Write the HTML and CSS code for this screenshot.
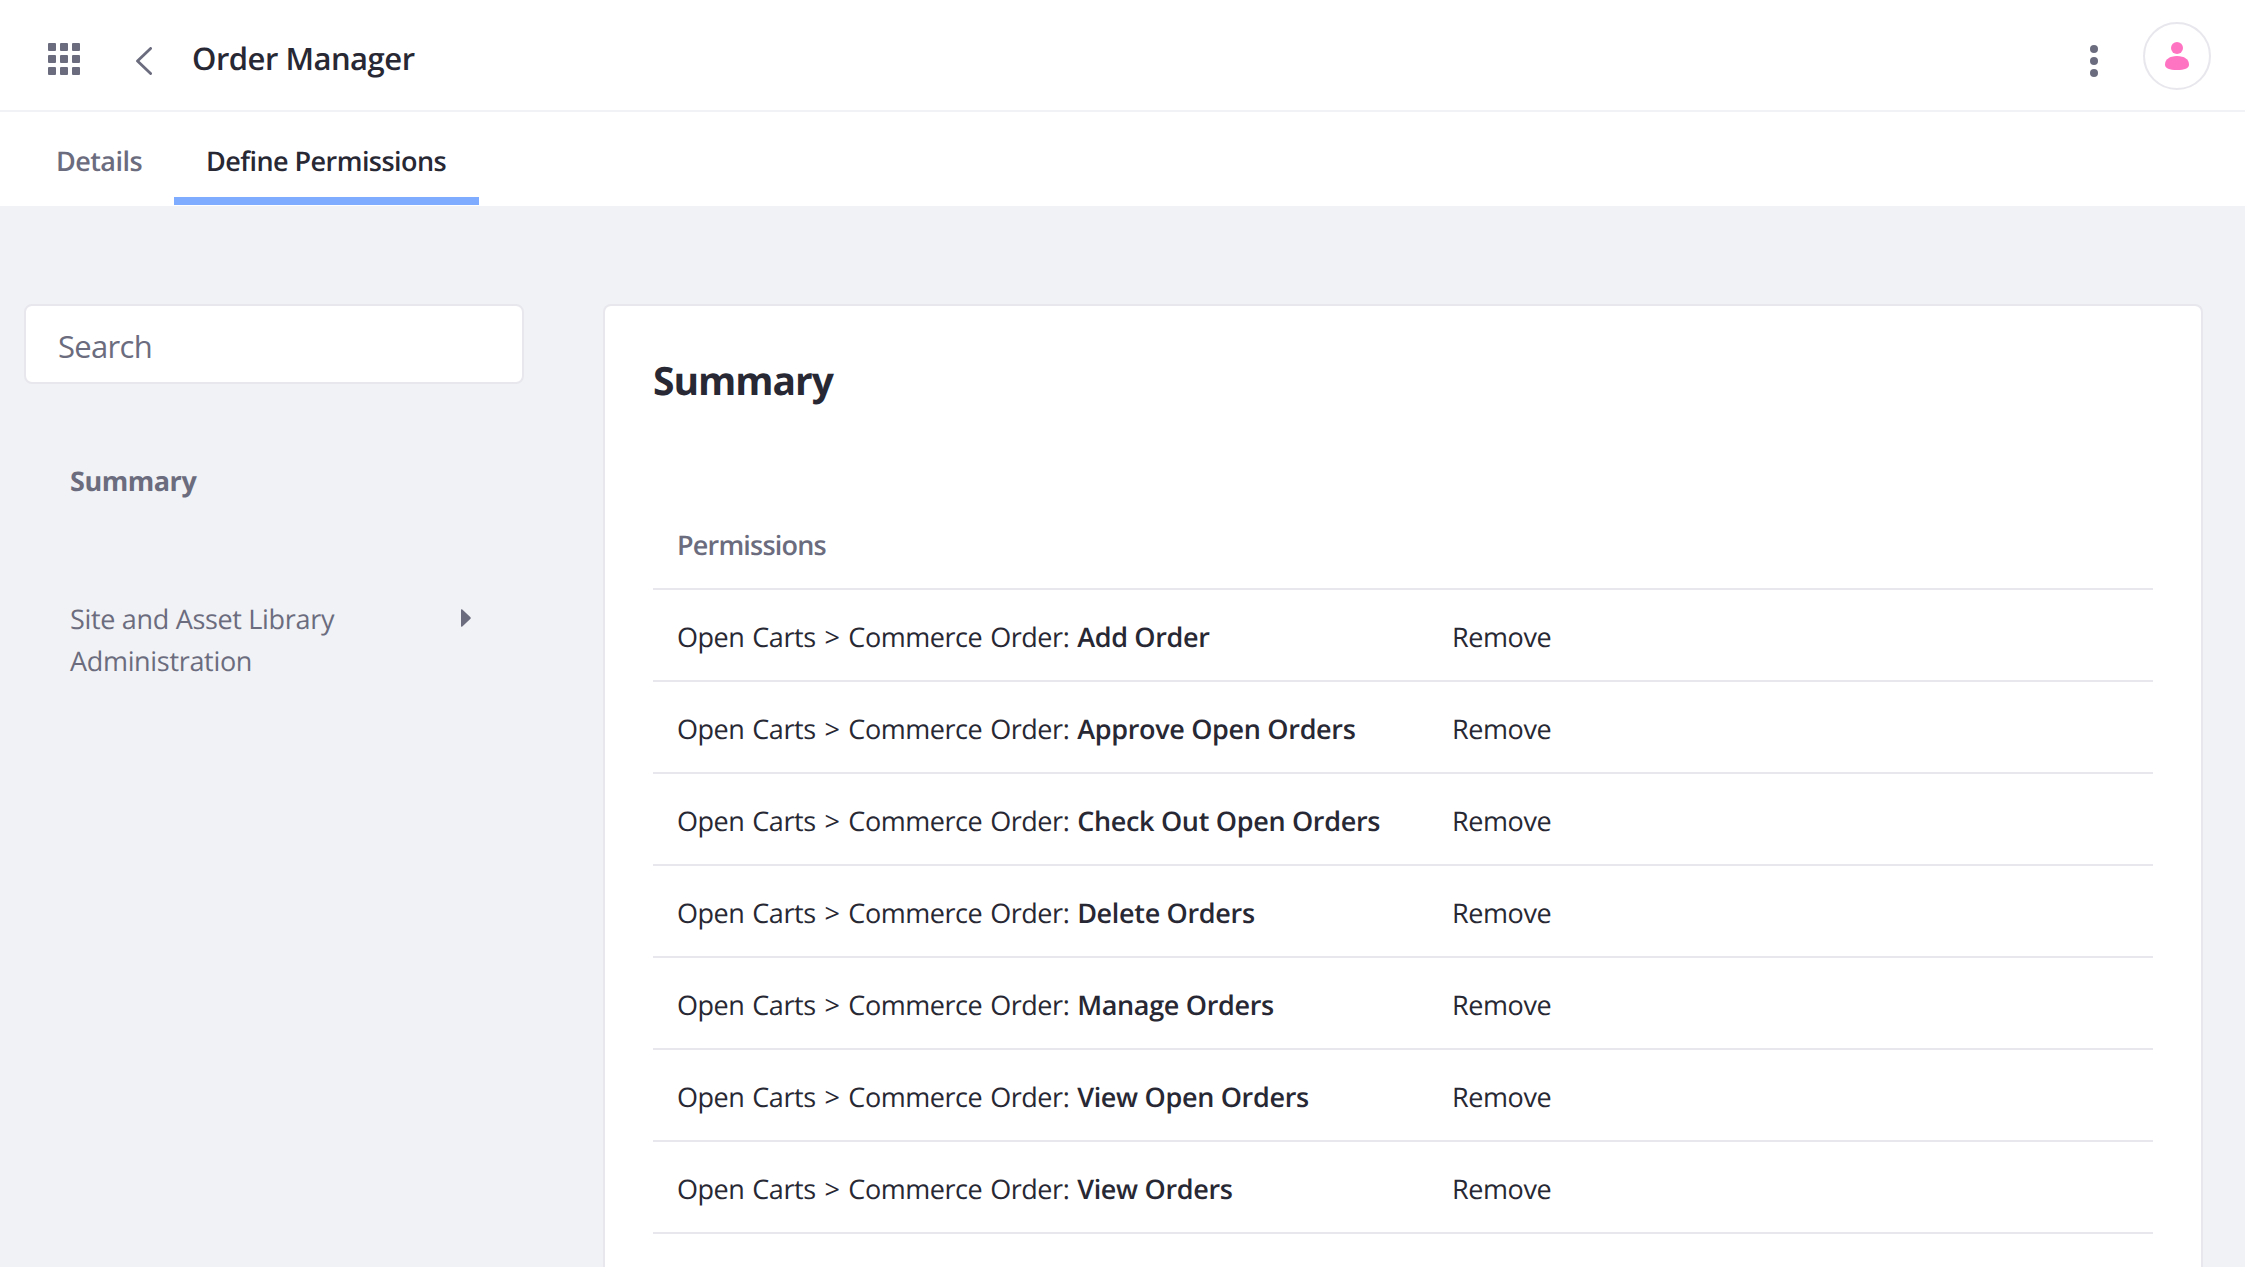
FILE: index.html
```html
<!DOCTYPE html>
<html lang="en">
<head>
<meta charset="utf-8">
<title>Order Manager</title>
<link rel="stylesheet" href="styles.css">
</head>
<body>
<header class="header">
  <svg class="icon-apps" viewBox="0 0 32 32">
    <rect width="8" height="8" rx="1"/><rect x="12" width="8" height="8" rx="1"/><rect x="24" width="8" height="8" rx="1"/>
    <rect y="12" width="8" height="8" rx="1"/><rect x="12" y="12" width="8" height="8" rx="1"/><rect x="24" y="12" width="8" height="8" rx="1"/>
    <rect y="24" width="8" height="8" rx="1"/><rect x="12" y="24" width="8" height="8" rx="1"/><rect x="24" y="24" width="8" height="8" rx="1"/>
  </svg>
  <svg class="icon-back" viewBox="0 0 16 28"><path d="M14.6 1.4 1.5 14l13.100 12.600"/></svg>
  <h1 class="title">Order Manager</h1>
  <svg class="icon-more" viewBox="0 0 8 32"><circle cx="4" cy="4" r="4"/><circle cx="4" cy="16" r="4"/><circle cx="4" cy="28" r="4"/></svg>
  <div class="avatar">
    <svg class="icon-user" viewBox="0 0 24 28"><circle cx="12" cy="6" r="6"/><path d="M0 22.5C0 17.5 4.500 14 12 14s12 3.500 12 8.500C24 26.500 19.500 28 12 28S0 26.500 0 22.500Z"/></svg>
  </div>
</header>
<nav class="tabs">
  <a class="tab">Details</a>
  <a class="tab tab-active">Define Permissions</a>
</nav>
<main class="main">
  <aside class="sidebar">
    <input class="search" type="text" placeholder="Search">
    <a class="side-link side-current">Summary</a>
    <a class="side-link side-group">
      <span class="side-label">Site and Asset Library Administration</span>
      <svg class="icon-caret" viewBox="0 0 10 18"><path d="M0 1Q0 0 1 .300L9.500 8.300Q10 9 9.500 9.700L1 17.700Q0 18 0 17Z"/></svg>
    </a>
  </aside>
  <section class="card">
    <h2 class="card-title">Summary</h2>
    <div class="table">
      <div class="row row-head">Permissions</div>
      <div class="row"><span class="perm">Open Carts <span class="sep">&gt;</span> Commerce Order: <b class="action">Add Order</b></span><a class="remove">Remove</a></div>
      <div class="row"><span class="perm">Open Carts <span class="sep">&gt;</span> Commerce Order: <b class="action">Approve Open Orders</b></span><a class="remove">Remove</a></div>
      <div class="row"><span class="perm">Open Carts <span class="sep">&gt;</span> Commerce Order: <b class="action">Check Out Open Orders</b></span><a class="remove">Remove</a></div>
      <div class="row"><span class="perm">Open Carts <span class="sep">&gt;</span> Commerce Order: <b class="action">Delete Orders</b></span><a class="remove">Remove</a></div>
      <div class="row"><span class="perm">Open Carts <span class="sep">&gt;</span> Commerce Order: <b class="action">Manage Orders</b></span><a class="remove">Remove</a></div>
      <div class="row"><span class="perm">Open Carts <span class="sep">&gt;</span> Commerce Order: <b class="action">View Open Orders</b></span><a class="remove">Remove</a></div>
      <div class="row"><span class="perm">Open Carts <span class="sep">&gt;</span> Commerce Order: <b class="action">View Orders</b></span><a class="remove">Remove</a></div>
    </div>
  </section>
</main>
</body>
</html>
```
FILE: styles.css
```css
* { box-sizing: border-box; }

body {
  margin: 0;
  height: 100vh;
  display: flex;
  flex-direction: column;
  overflow: hidden;
  background: #f1f2f5;
  color: #272833;
  font: 400 27px/42px "Open Sans", "Noto Sans", sans-serif;
  text-rendering: geometricPrecision;
}

svg { display: block; flex: none; fill: #6b6c7e; }

.header {
  flex: none;
  display: flex;
  align-items: center;
  height: 112px;
  padding: 0 34px 0 48px;
  background: #fff;
  border-bottom: 2px solid #f1f2f5;
}

.icon-apps { width: 32px; height: 32px; margin-top: 8px; }
.icon-back { width: 16px; height: 28px; margin: 12px 40px 0 56px; fill: none; stroke: #6b6c7e; stroke-width: 2.8; stroke-linecap: round; stroke-linejoin: round; }
.title { flex: 1; margin: 8px 0 0; font-size: 31px; font-weight: 600; letter-spacing: -0.5px; }
.icon-more { width: 8px; height: 32px; margin: 12px 45px 0 0; }

.avatar {
  display: flex;
  align-items: center;
  justify-content: center;
  width: 68px;
  height: 68px;
  margin-top: 2px;
  border: 2px solid #e7e7ed;
  border-radius: 50%;
}
.icon-user { width: 24px; height: 28px; fill: #ff73c3; }

.tabs {
  flex: none;
  display: flex;
  height: 94px;
  padding: 0 0 1px 24px;
  background: #fff;
}
.tab {
  width: 150px;
  padding: 28px 0 0 32px;
  color: #6b6c7e;
  font-weight: 600;
  letter-spacing: -0.55px;
  white-space: nowrap;
}
.tab-active { width: 305px; color: #272833; border-bottom: 8px solid #80acff; }

.main { flex: 1; display: flex; gap: 79px; padding: 98px 42px 0 24px; }

.sidebar { flex: none; width: 500px; color: #6b6c7e; }
.search {
  display: block;
  width: 500px;
  height: 80px;
  padding: 4px 28px 0 32px;
  background: #fff;
  border: 2px solid #e7e7ed;
  border-radius: 8px;
  font: 400 31px/42px "Open Sans", "Noto Sans", sans-serif;
  letter-spacing: -0.7px;
}
.search::placeholder { color: #6b6c7e; opacity: 1; }
.side-link { display: flex; margin-left: 46px; }
.side-current { margin-top: 76px; font-weight: 700; letter-spacing: -0.47px; }
.side-group { margin-top: 96px; letter-spacing: -0.32px; }
.side-label { width: 391px; padding-right: 80px; }
.icon-caret { width: 10px; height: 18px; margin-top: 11px; }

.card {
  flex: 1;
  padding: 54px 48px 0;
  background: #fff;
  border: 2px solid #e7e7ed;
  border-bottom: 0;
  border-radius: 8px 8px 0 0;
}
.card-title { margin: 0; font-size: 39px; line-height: 42px; letter-spacing: -1.05px; }
.table { margin-top: 98px; }
.row {
  display: flex;
  align-items: center;
  height: 92px;
  padding: 3px 0 0 24px;
  border-bottom: 2px solid #e7e7ed;
}
.row-head { height: 90px; padding-top: 2px; color: #6b6c7e; font-weight: 600; letter-spacing: -0.8px; }
.perm { width: 775px; white-space: nowrap; letter-spacing: -0.45px; word-spacing: 1.3px; }
.sep { margin: 0 1px; }
.action { font-weight: 600; letter-spacing: -0.32px; word-spacing: 0; }
.remove { letter-spacing: -0.4px; }
```
